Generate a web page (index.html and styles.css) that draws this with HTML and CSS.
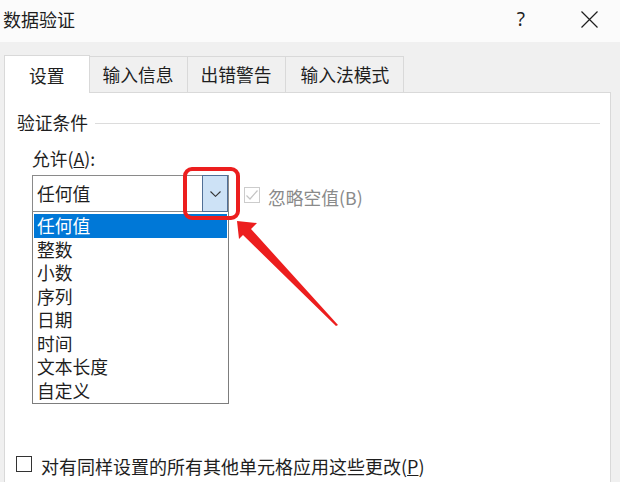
FILE: index.html
```html
<!DOCTYPE html>
<html lang="zh-CN">
<head>
<meta charset="utf-8">
<title>数据验证</title>
<link rel="stylesheet" href="styles.css">
</head>
<body>
<div class="dialog">
  <div class="titlebar">
    <span class="title">数据验证</span>
    <span class="help">?</span>
    <span class="close">
      <svg width="17" height="17" viewBox="0 0 17 17"><path d="M0.5 0.5 L16.5 16.5 M16.5 0.5 L0.5 16.5" stroke="#1e1e1e" stroke-width="1.2" fill="none"/></svg>
    </span>
  </div>
  <div class="body">
    <div class="tabs">
      <div class="tab active">设置</div>
      <div class="tab">输入信息</div>
      <div class="tab">出错警告</div>
      <div class="tab">输入法模式</div>
    </div>
    <div class="panel">
      <div class="group-head"><span>验证条件</span><span class="rule"></span></div>
      <div class="allow-label">允许(<u>A</u>):</div>
      <div class="allow-row">
        <div class="combo-wrap">
          <div class="combo">
            <span class="combo-text">任何值</span>
            <span class="drop">
              <svg width="11" height="6" viewBox="0 0 11 6"><path d="M0.5 0.5 L5.5 5.3 L10.5 0.5" stroke="#333" stroke-width="1.1" fill="none"/></svg>
            </span>
          </div>
          <ul class="list">
            <li class="sel">任何值</li>
            <li>整数</li>
            <li>小数</li>
            <li>序列</li>
            <li>日期</li>
            <li>时间</li>
            <li>文本长度</li>
            <li>自定义</li>
          </ul>
        </div>
        <div class="check disabled">
          <span class="box">
            <svg width="14" height="14" viewBox="0 0 14 14"><path d="M1.5 7.5 L5 11 L12.5 2.5" stroke="#c4c4c4" stroke-width="1.2" fill="none"/></svg>
          </span>
          <span class="label">忽略空值(B)</span>
        </div>
      </div>
      <div class="check apply">
        <span class="box"></span>
        <span class="label">对有同样设置的所有其他单元格应用这些更改(<u>P</u>)</span>
      </div>
    </div>
  </div>
  <svg class="annotation" width="620" height="482" viewBox="0 0 620 482">
    <rect x="185" y="169" width="53" height="49" rx="7" ry="7" fill="none" stroke="#ec1e1e" stroke-width="4"/>
    <polygon points="237,221 257,223 251,229 338,325 336,326 243,235 239,239" fill="#ec1e1e"/>
  </svg>
</div>
</body>
</html>
```

FILE: styles.css
```css
html, body {
  margin: 0;
  padding: 0;
}
body {
  width: 620px;
  height: 482px;
  overflow: hidden;
  font-family: "Noto Sans CJK SC", "Noto Sans", sans-serif;
  color: #1e1e1e;
  background: #f0f0f0;
}
.dialog {
  position: relative;
  width: 620px;
  height: 482px;
  overflow: hidden;
}
.titlebar {
  height: 42px;
  background: #fbfbfb;
  display: flex;
  align-items: center;
}
.title {
  font-size: 18px;
  margin-left: 3px;
  line-height: 24px;
  margin-top: -4px;
}
.help {
  margin-left: auto;
  font-family: "Noto Sans", sans-serif;
  font-size: 19px;
  line-height: 24px;
  margin-top: -4px;
  color: #1e1e1e;
}
.close {
  display: flex;
  margin-left: 56px;
  margin-right: 22px;
  margin-top: -4px;
}
.body {
  padding-top: 13px;
}
.tabs {
  display: flex;
  align-items: flex-end;
  padding-left: 4px;
  font-size: 17.75px;
}
.tab {
  box-sizing: border-box;
  height: 36px;
  line-height: 34px;
  padding: 0 13px;
  border: 1px solid #d9d9d9;
  border-bottom: none;
  margin-left: -1px;
  background: #f0f0f0;
}
.tab:last-child {
  padding: 0 14px 0 15px;
}
.tab.active {
  position: relative;
  z-index: 1;
  height: 38px;
  line-height: 38px;
  margin-left: 0;
  margin-bottom: -1px;
  padding: 0 24px;
  background: #fff;
}
.tab.active + .tab {
  margin-left: 0;
  border-left: none;
}
.panel {
  box-sizing: border-box;
  margin: 0 9px 0 4px;
  height: 390px;
  background: #fff;
  border: 1px solid #d9d9d9;
  border-bottom: none;
  padding: 17px 10px 0 12px;
  font-size: 17.75px;
}
.group-head {
  display: flex;
  align-items: center;
  line-height: 24px;
}
.rule {
  flex: 1;
  height: 1px;
  background: #dcdcdc;
  margin-left: 7px;
  margin-top: 2px;
}
.allow-label {
  margin: 12px 0 0 15px;
  line-height: 24px;
}
.allow-row {
  display: flex;
  align-items: flex-start;
  margin: 5px 0 0 15px;
}
.combo-wrap {
  width: 197px;
}
.combo {
  box-sizing: border-box;
  height: 37px;
  border: 1px solid #8a8a8a;
  display: flex;
  align-items: stretch;
}
.combo-text {
  flex: 1;
  line-height: 35px;
  padding-left: 4px;
}
.drop {
  box-sizing: border-box;
  width: 26px;
  margin: -1px 0 -1px;
  border: 1px solid #506f96;
  background: #cde2f6;
  display: flex;
  align-items: center;
  justify-content: center;
}
.drop svg {
  margin-top: 1px;
}
.list {
  list-style: none;
  margin: 0;
  padding: 2px 1px 1px;
  border: 1px solid #7d7d7d;
  border-top: none;
}
.list li {
  height: 23.5px;
  line-height: 23.5px;
  padding-left: 3px;
}
.list li.sel {
  background: #0078d7;
  color: #fff;
}
.check {
  display: flex;
  align-items: center;
}
.check .box {
  box-sizing: border-box;
  width: 16px;
  height: 16px;
  border: 1px solid #333;
  background: #fff;
  display: flex;
  align-items: center;
  justify-content: center;
}
.check.disabled {
  margin: 6px 0 0 15px;
}
.check.disabled .box {
  border-color: #cccccc;
}
.check.disabled .label {
  color: #8a8a8a;
  margin-left: 8px;
  margin-top: 4px;
  line-height: 24px;
}
.check.apply {
  margin: 46px 0 0 -1px;
}
.check.apply .label {
  margin-left: 9px;
  line-height: 24px;
  margin-top: 4px;
  font-size: 18px;
}
.annotation {
  position: absolute;
  left: 0;
  top: 0;
  pointer-events: none;
}
```
